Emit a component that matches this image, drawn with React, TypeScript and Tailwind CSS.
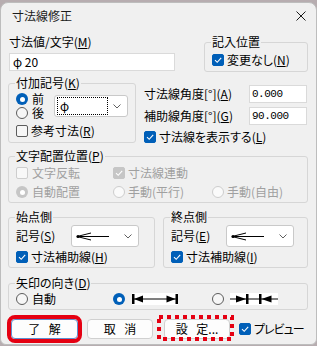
import React from "react";

type BoxProps = { checked?: boolean; disabled?: boolean };

function Check({ checked = false, disabled = false }: BoxProps) {
  let cls = "bg-[#f6f6f6] border-[#5c5c5c]";
  if (checked && !disabled) cls = "bg-[#005fb8] border-[#005fb8]";
  else if (checked && disabled) cls = "bg-[#c6c6c6] border-[#c6c6c6]";
  else if (disabled) cls = "bg-[#f8f8f8] border-[#cdcdcd]";
  return (
    <span className={`w-[12px] h-[12px] shrink-0 rounded-[2px] border flex items-center justify-center ${cls}`}>
      {checked && (
        <svg width="10" height="10" viewBox="0 0 10 10">
          <path d="M2 5.2 L4.2 7.3 L8.2 2.8" fill="none" stroke="#ffffff" strokeWidth="1.1" />
        </svg>
      )}
    </span>
  );
}

function Radio({ checked = false, disabled = false }: BoxProps) {
  let cls = "bg-[#f6f6f6] border border-[#5c5c5c]";
  if (checked && !disabled) cls = "bg-[#005fb8]";
  else if (checked && disabled) cls = "bg-[#c6c6c6]";
  else if (disabled) cls = "bg-[#fafafa] border border-[#cdcdcd]";
  return (
    <span className={`w-[12px] h-[12px] shrink-0 rounded-full flex items-center justify-center ${cls}`}>
      {checked && <span className="w-[5px] h-[5px] rounded-full bg-white" />}
    </span>
  );
}

function Chevron() {
  return (
    <svg width="8" height="5" viewBox="0 0 8 5" className="ml-auto shrink-0">
      <path d="M0.5 0.5 L4 4 L7.5 0.5" fill="none" stroke="#606060" strokeWidth="1" />
    </svg>
  );
}

function ArrowCombo() {
  return (
    <div className="w-[68px] h-[22px] bg-white border border-[#c9c9c9] rounded-[3px] flex items-center pl-[4px] pr-[6px]">
      <svg width="34" height="9" viewBox="0 0 34 9">
        <line x1="1" y1="4.5" x2="33" y2="4.5" stroke="#000" strokeWidth="1" />
        <line x1="1" y1="4.5" x2="15" y2="1" stroke="#000" strokeWidth="1" />
        <line x1="1" y1="4.5" x2="15" y2="8" stroke="#000" strokeWidth="1" />
        <circle cx="2" cy="4.5" r="1.6" fill="#000" />
      </svg>
      <Chevron />
    </div>
  );
}

function ArrowIn() {
  return (
    <svg width="46" height="12" viewBox="0 0 46 12">
      <rect x="0" y="0" width="46" height="12" fill="#ffffff" />
      <rect x="0" y="1" width="2.5" height="10" fill="#000" />
      <polygon points="2,6 11,2.5 11,9.5" fill="#000" />
      <line x1="2" y1="6" x2="44" y2="6" stroke="#000" strokeWidth="1" />
      <polygon points="43.5,6 34.5,2.5 34.5,9.5" fill="#000" />
      <rect x="43.5" y="1" width="2.5" height="10" fill="#000" />
    </svg>
  );
}

function ArrowOut() {
  return (
    <svg width="48" height="12" viewBox="0 0 48 12">
      <rect x="0" y="0" width="48" height="12" fill="#ffffff" />
      <line x1="0" y1="6" x2="48" y2="6" stroke="#000" strokeWidth="1" />
      <polygon points="16,6 6,2.5 6,9.5" fill="#000" />
      <rect x="16" y="1" width="2.5" height="10" fill="#000" />
      <rect x="29" y="1" width="2.5" height="10" fill="#000" />
      <polygon points="31.5,6 41.5,2.5 41.5,9.5" fill="#000" />
    </svg>
  );
}

export default function App() {
  return (
    <div className="w-[317px] h-[346px] overflow-hidden bg-[#b7adb0] pt-[2px] font-['Noto_Sans_CJK_JP',sans-serif] text-[12px] leading-[14px] text-black whitespace-nowrap">
      <div className="h-[343px] bg-[#f0f0f0] border border-[#bdbdbd] rounded-t-[8px] rounded-b-[6px] flex flex-col">
        {/* title bar */}
        <div className="h-[25px] shrink-0 flex items-center justify-between pl-[11px] pr-[10px]">
          <span className="text-[#1b1b1b]">寸法線修正</span>
          <svg width="10" height="10" viewBox="0 0 10 10">
            <path d="M0.5 0.5 L9.5 9.5 M9.5 0.5 L0.5 9.5" stroke="#1b1b1b" strokeWidth="1" />
          </svg>
        </div>

        <div className="flex flex-col pl-[7px] pr-[8px] pt-[7px]">
          {/* row 1 */}
          <div className="flex items-start">
            <div className="ml-[1px] flex flex-col">
              <span className="h-[14px]">
                寸法値/文字(<u>M</u>)
              </span>
              <div className="mt-[4px] w-[166px] h-[18px] bg-white border border-[#dadada] flex items-center pl-[3px]">
                φ 20
              </div>
            </div>
            <fieldset className="ml-auto w-[104px] border border-[#d6d6d6] rounded-[3px] px-[7px] pt-[4px] pb-[4px]">
              <legend className="px-[1px] -ml-[1px] leading-[14px]">記入位置</legend>
              <label className="h-[14px] flex items-center gap-[3px]">
                <Check checked />
                <span className="[font-feature-settings:'palt']">
                  変更なし(<u>N</u>)
                </span>
              </label>
            </fieldset>
          </div>

          {/* row 2 */}
          <div className="mt-[4px] flex items-start">
            <fieldset className="w-[126px] shrink-0 border border-[#d6d6d6] rounded-[3px] px-[7px] pt-[2px] pb-[4px]">
              <legend className="px-[1px] -ml-[1px] leading-[14px]">
                付加記号(<u>K</u>)
              </legend>
              <div className="flex items-center">
                <div className="w-[38px] flex flex-col">
                  <label className="h-[14px] flex items-center gap-[4px]">
                    <Radio checked />
                    <span>前</span>
                  </label>
                  <label className="h-[14px] flex items-center gap-[4px]">
                    <Radio />
                    <span>後</span>
                  </label>
                </div>
                <div className="w-[74px] h-[22px] bg-white border border-[#c9c9c9] rounded-[3px] flex items-center pl-[2px] pr-[6px]">
                  <div className="w-[51px] h-[18px] border border-dotted border-black flex items-center pl-[2px]">φ</div>
                  <Chevron />
                </div>
              </div>
              <label className="mt-[4px] h-[14px] flex items-center gap-[3px]">
                <Check />
                <span>
                  参考寸法(<u>R</u>)
                </span>
              </label>
            </fieldset>

            <div className="ml-[8px] w-[163px] flex flex-col pt-[9px]">
              <div className="h-[18px] flex items-center justify-between">
                <span>
                  寸法線角度[°](<u>A</u>)
                </span>
                <div className="w-[58px] h-[18px] bg-white border border-[#dadada] flex items-center pl-[2px] font-['Liberation_Mono',monospace] text-[11px] tracking-[-0.5px]">
                  0.000
                </div>
              </div>
              <div className="mt-[4px] h-[18px] flex items-center justify-between">
                <span>
                  補助線角度[°](<u>G</u>)
                </span>
                <div className="w-[58px] h-[18px] bg-white border border-[#dadada] flex items-center pl-[2px] font-['Liberation_Mono',monospace] text-[11px] tracking-[-0.5px]">
                  90.000
                </div>
              </div>
              <label className="mt-[5px] h-[14px] flex items-center gap-[3px]">
                <Check checked />
                <span className="[font-feature-settings:'palt']">
                  寸法線を表示する(<u>L</u>)
                </span>
              </label>
            </div>
          </div>

          {/* row 3 */}
          <fieldset className="mt-[5px] border border-[#d6d6d6] rounded-[3px] px-[7px] pt-[3px] pb-[3px]">
            <legend className="px-[1px] -ml-[1px] leading-[14px]">
              文字配置位置(<u>P</u>)
            </legend>
            <div className="grid grid-cols-[97px_99px_1fr] text-[#a0a0a0]">
              <label className="h-[14px] flex items-center gap-[4px]">
                <Check disabled />
                <span>文字反転</span>
              </label>
              <label className="h-[14px] flex items-center gap-[3px]">
                <Check checked disabled />
                <span>寸法線連動</span>
              </label>
              <span />
            </div>
            <div className="mt-[5px] grid grid-cols-[97px_99px_1fr] text-[#a0a0a0]">
              <label className="h-[14px] flex items-center gap-[4px]">
                <Radio checked disabled />
                <span>自動配置</span>
              </label>
              <label className="h-[14px] flex items-center gap-[3px]">
                <Radio disabled />
                <span>手動(平行)</span>
              </label>
              <label className="h-[14px] flex items-center gap-[3px]">
                <Radio disabled />
                <span>手動(自由)</span>
              </label>
            </div>
          </fieldset>

          {/* row 4 */}
          <div className="mt-[7px] flex gap-[8px]">
            <fieldset className="w-[147px] shrink-0 border border-[#d6d6d6] rounded-[3px] px-[7px] pt-[1px] pb-[3px]">
              <legend className="px-[1px] -ml-[1px] leading-[14px]">始点側</legend>
              <div className="h-[22px] flex items-center">
                <span className="w-[55px]">
                  記号(<u>S</u>)
                </span>
                <ArrowCombo />
              </div>
              <label className="mt-[3px] h-[14px] flex items-center gap-[3px]">
                <Check checked />
                <span>
                  寸法補助線(<u>H</u>)
                </span>
              </label>
            </fieldset>
            <fieldset className="flex-1 border border-[#d6d6d6] rounded-[3px] px-[7px] pt-[1px] pb-[3px]">
              <legend className="px-[1px] -ml-[1px] leading-[14px]">終点側</legend>
              <div className="h-[22px] flex items-center">
                <span className="w-[55px]">
                  記号(<u>E</u>)
                </span>
                <ArrowCombo />
              </div>
              <label className="mt-[3px] h-[14px] flex items-center gap-[3px]">
                <Check checked />
                <span>
                  寸法補助線(<u>I</u>)
                </span>
              </label>
            </fieldset>
          </div>

          {/* row 5 */}
          <fieldset className="mt-[8px] border border-[#d6d6d6] rounded-[3px] px-[7px] pt-[2px] pb-[3px]">
            <legend className="px-[1px] -ml-[1px] leading-[14px] [font-feature-settings:'palt']">
              矢印の向き(<u>D</u>)
            </legend>
            <div className="grid grid-cols-[97px_99px_1fr] items-center h-[14px]">
              <label className="flex items-center gap-[4px]">
                <Radio />
                <span>自動</span>
              </label>
              <label className="flex items-center gap-[7px]">
                <Radio checked />
                <ArrowIn />
              </label>
              <label className="flex items-center gap-[6px]">
                <Radio />
                <ArrowOut />
              </label>
            </div>
          </fieldset>

          {/* buttons */}
          <div className="mt-[9px] ml-[3px] h-[20px] flex items-center">
            <button className="shrink-0 w-[67px] h-[20px] bg-[#fdfdfd] border border-[#5e8fd0] rounded-[4px] flex items-center justify-center [word-spacing:6px] outline-4 outline-solid outline-[#e50012]">
              了 解
            </button>
            <button className="shrink-0 ml-[9px] w-[66px] h-[20px] bg-[#fdfdfd] border border-[#d0d0d0] rounded-[4px] flex items-center justify-center [word-spacing:6px]">
              取 消
            </button>
            <div className="relative shrink-0 ml-[11px]">
              <button className="w-[66px] h-[20px] bg-[#fdfdfd] border border-[#d0d0d0] rounded-[4px] flex items-center justify-center [word-spacing:6px]">
                設 定...
              </button>
              <svg
                width="77"
                height="26"
                viewBox="0 0 77 26"
                className="absolute left-[-7px] top-[-4px] pointer-events-none"
              >
                <rect x="2" y="2" width="73" height="22" fill="none" stroke="#e50012" strokeWidth="4" strokeDasharray="4 4" />
              </svg>
            </div>
            <label className="shrink-0 ml-[9px] flex items-center gap-[3px]">
              <Check checked />
              <span className="[font-feature-settings:'palt'] tracking-[-1px]">プレビュー</span>
            </label>
          </div>
        </div>
      </div>
    </div>
  );
}
